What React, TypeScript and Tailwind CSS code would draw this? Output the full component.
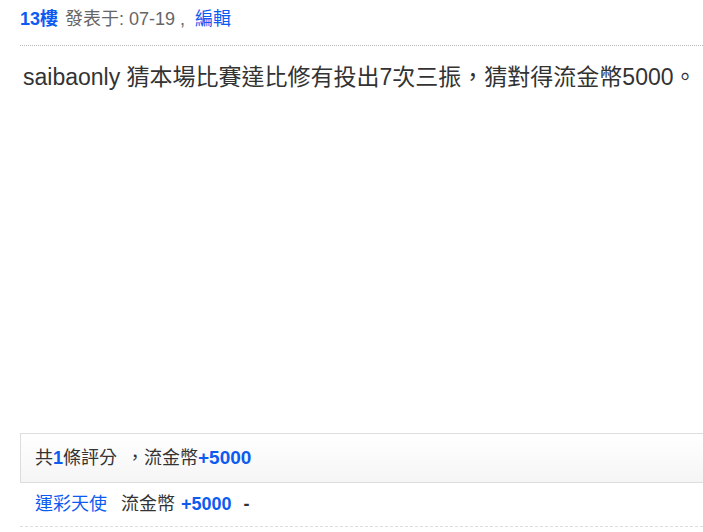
// PostFloor.tsx

const font = { fontFamily: '"Liberation Sans", Arial, "Noto Sans CJK TC", sans-serif' };

const PostFloor = () => {
  return (
    <div className="w-[703px] h-[532px] overflow-hidden bg-white pl-5" style={font}>
      {/* 樓層資訊 */}
      <div className="h-[46px] flex items-start pt-[7px] text-[18px] leading-[24px] text-[#666] border-b border-dotted border-[#bbb] whitespace-nowrap">
        <span className="font-bold text-[#0d5bf0]">13樓</span>
        <span className="ml-[7px]">發表于: 07-19 ,</span>
        <a href="#" className="ml-[10px] text-[#0d5bf0]">編輯</a>
      </div>

      {/* 內文 */}
      <div className="h-[387px] pt-[15px] pl-[3px] text-[23px] leading-[32px] text-[#333] whitespace-nowrap">
        saibaonly 猜本場比賽達比修有投出7次三振，猜對得流金幣5000。
      </div>

      {/* 評分 */}
      <div className="w-[720px] h-[50px] flex items-center pl-[14px] border border-[#ddd] bg-gradient-to-b from-white to-[#f5f5f5] text-[18px] text-[#333] whitespace-nowrap">
        共<span className="font-bold text-[#0d5bf0]">1</span>條評分
        <span className="ml-[9px]">，流金幣</span>
        <span className="font-bold text-[#0d5bf0] text-[19px]">+5000</span>
      </div>
      <div className="h-[44px] flex items-center pl-[15px] text-[18px] text-[#333] border-b border-dashed border-[#ddd] whitespace-nowrap">
        <a href="#" className="text-[#0d5bf0]">運彩天使</a>
        <span className="ml-[14px]">流金幣</span>
        <span className="ml-[6px] font-bold text-[#0d5bf0]">+5000</span>
        <span className="ml-[12px] font-bold">-</span>
      </div>
    </div>
  );
};

export default function App() {
  return <PostFloor />;
}
